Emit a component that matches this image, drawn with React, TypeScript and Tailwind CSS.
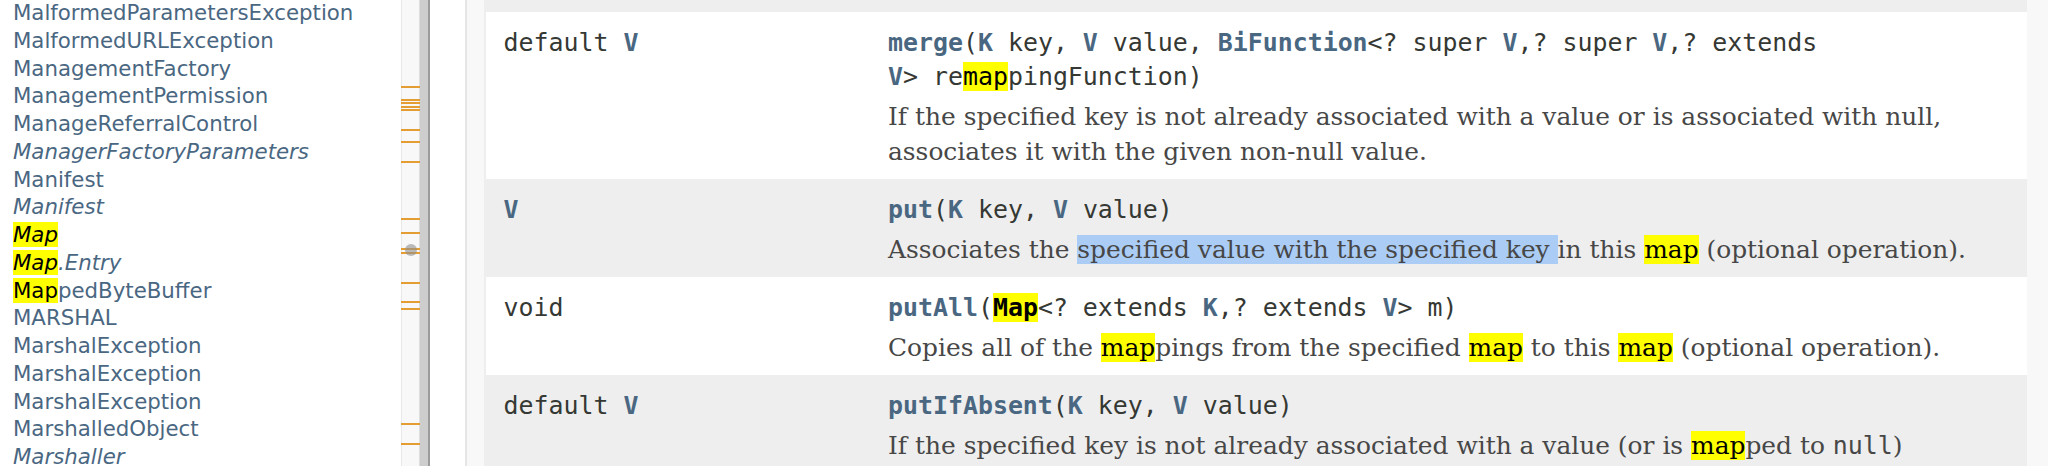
import type { ReactNode } from "react";

const classes: { name: ReactNode; italic?: boolean }[] = [
  { name: "MalformedParametersException" },
  { name: "MalformedURLException" },
  { name: "ManagementFactory" },
  { name: "ManagementPermission" },
  { name: "ManageReferralControl" },
  { name: "ManagerFactoryParameters", italic: true },
  { name: "Manifest" },
  { name: "Manifest", italic: true },
  { name: <Hit>Map</Hit>, italic: true },
  { name: <><Hit>Map</Hit>.Entry</>, italic: true },
  { name: <><Hit>Map</Hit>pedByteBuffer</> },
  { name: "MARSHAL" },
  { name: "MarshalException" },
  { name: "MarshalException" },
  { name: "MarshalException" },
  { name: "MarshalledObject" },
  { name: "Marshaller", italic: true },
];

// find-in-page markers on the left frame's scrollbar
const ticks = [86, 99, 102, 105.5, 109, 129, 141, 161, 218, 231.5, 248, 251.5, 281.5, 301, 307.5, 423, 443];

function Hit({ children }: { children: ReactNode }) {
  return <span className="bg-[#ffff00] text-black">{children}</span>;
}

function T({ children }: { children: ReactNode }) {
  return <span className="font-bold text-[#4a6782]">{children}</span>;
}

function Row({ gray, type, sig, desc }: { gray?: boolean; type: ReactNode; sig: ReactNode; desc: ReactNode }) {
  return (
    <div className={`grid grid-cols-[402px_1fr] pt-[14px] pb-[9.5px] ${gray ? "bg-[#eeeeee]" : "bg-white"}`}>
      <div className="pl-[17.5px] font-['DejaVu_Sans_Mono',monospace] text-[24.9px] leading-[34px] text-[#353833]">
        {type}
      </div>
      <div className="pr-[5px]">
        <div className="font-['DejaVu_Sans_Mono',monospace] text-[24.9px] leading-[34px] text-[#353833]">{sig}</div>
        <div className="mt-[5.5px] font-['DejaVu_Serif',serif] text-[24.9px] leading-[35px] text-[#474747]">{desc}</div>
      </div>
    </div>
  );
}

export default function App() {
  return (
    <div className="flex h-[466px] w-[2048px] overflow-hidden bg-white">
      {/* class list frame */}
      <aside className="flex w-[430px] shrink-0">
        <ul className="-mt-[1px] w-[401px] pl-[13px] font-['DejaVu_Sans',sans-serif] text-[21.3px] leading-[27.75px] text-[#4a6782]">
          {classes.map((c, i) => (
            <li key={i} className={`whitespace-nowrap ${c.italic ? "italic" : ""}`}>
              {c.name}
            </li>
          ))}
        </ul>
        <div className="relative w-[19px] border-x border-l-[#e8e8e8] border-r-[#dedede] bg-[#f8f8f8]">
          {ticks.map((y) => (
            <div key={y} className="absolute -left-px -right-px h-[2px] bg-[#e39d33]" style={{ top: y }} />
          ))}
          <div className="absolute left-[3px] top-[244px] h-[12px] w-[12px] rounded-full bg-[#8f8f8f]/60" />
        </div>
        <div className="w-[8px] bg-[#cdcdcd]" />
        <div className="w-[2px] bg-[#9c9c9c]" />
      </aside>

      <div className="w-[35px] shrink-0 bg-white" />
      <div className="w-[2px] shrink-0 bg-[#e6e6e6]" />
      <div className="w-[17px] shrink-0 bg-[#f8f8f8]" />

      {/* method summary table */}
      <main className="flex-1 bg-[#eeeeee] pl-[2px] pt-[11.7px]">
        <Row
          type={<>default <T>V</T></>}
          sig={
            <>
              <T>merge</T>(<T>K</T> key, <T>V</T> value, <T>BiFunction</T>&lt;? super <T>V</T>,? super <T>V</T>,? extends
              <br />
              <T>V</T>&gt; re<Hit>map</Hit>pingFunction)
            </>
          }
          desc={
            <>
              If the specified key is not already associated with a value or is associated with null,
              <br />
              associates it with the given non-null value.
            </>
          }
        />
        <Row
          gray
          type={<T>V</T>}
          sig={<><T>put</T>(<T>K</T> key, <T>V</T> value)</>}
          desc={
            <>
              Associates the <span className="bg-[#abcdf5]">specified value with the specified key </span>in this{" "}
              <Hit>map</Hit> (optional operation).
            </>
          }
        />
        <Row
          type="void"
          sig={
            <>
              <T>putAll</T>(<span className="bg-[#ffff00] font-bold text-black">Map</span>&lt;? extends <T>K</T>,? extends{" "}
              <T>V</T>&gt; m)
            </>
          }
          desc={
            <>
              Copies all of the <Hit>map</Hit>pings from the specified <Hit>map</Hit> to this <Hit>map</Hit> (optional
              operation).
            </>
          }
        />
        <Row
          gray
          type={<>default <T>V</T></>}
          sig={<><T>putIfAbsent</T>(<T>K</T> key, <T>V</T> value)</>}
          desc={
            <>
              If the specified key is not already associated with a value (or is <Hit>map</Hit>ped to{" "}
              <code className="font-['DejaVu_Sans_Mono',monospace]">null</code>)
              <br />
              associates it with the given value and returns null, else returns the current value.
            </>
          }
        />
      </main>

      <div className="w-[21px] shrink-0 bg-[#f8f8f8]" />
    </div>
  );
}
